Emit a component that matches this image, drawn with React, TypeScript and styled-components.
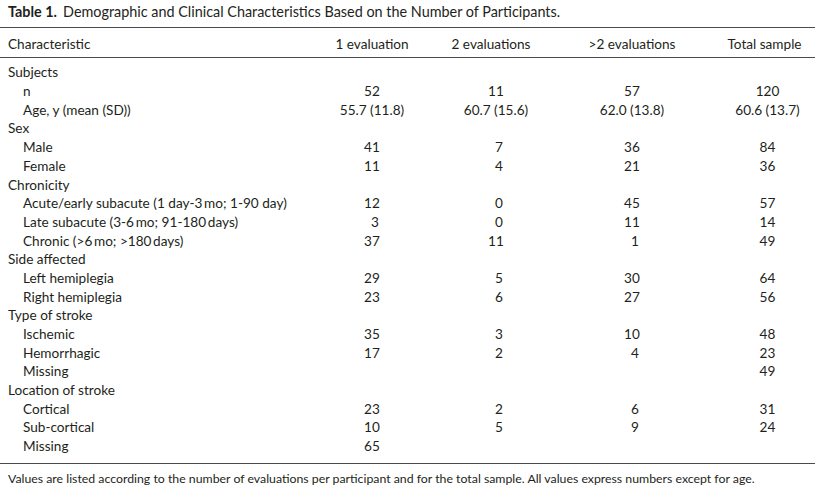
import React from 'react';
import styled, { createGlobalStyle } from 'styled-components';

const GlobalStyle = createGlobalStyle`
  html, body {
    margin: 0;
    padding: 0;
    background: #fff;
  }
  body {
    font-family: 'Lato', 'Liberation Sans', sans-serif;
    color: #231f20;
  }
`;

const Page = styled.div`
  width: 815px;
  padding-top: 3px;
`;

const Caption = styled.div`
  font-size: 14.4px;
  line-height: 18.7px;
  padding-left: 8px;
  margin-bottom: 5px;

  b {
    font-weight: 700;
    margin-right: 6px;
  }
`;

const Table = styled.div`
  border-top: 1px solid #4a4a4a;
  border-bottom: 1px solid #4a4a4a;
  font-size: 13.6px;
`;

const Row = styled.div`
  display: grid;
  grid-template-columns: 302px 124px 124px 148px 1fr;
  padding-left: 8px;
  line-height: 18.7px;
  height: 18.7px;
`;

const HeadRow = styled(Row)`
  height: auto;
  padding-top: 7px;
  padding-bottom: 4px;
  border-bottom: 1px solid #4a4a4a;
`;

const Body = styled.div`
  padding-top: 5px;
  padding-bottom: 7px;
`;

const Label = styled.div<{ $indent?: boolean }>`
  padding-left: ${p => (p.$indent ? '15px' : '0')};
  white-space: nowrap;
`;

const Cell = styled.div<{ $last?: boolean }>`
  text-align: center;
  white-space: nowrap;
  padding-left: ${p => (p.$last ? '14px' : '0')};
`;

// header labels sit a little left of the figures below them
const HeadCell = styled(Cell)<{ $pull?: number }>`
  padding-right: ${p => (p.$pull ?? 0) * 2}px;
`;

const Num = styled.span`
  display: inline-block;
  min-width: 14px;
  text-align: right;
`;

const Note = styled.div`
  font-size: 12.3px;
  line-height: 18.7px;
  margin-top: 6px;
  padding-left: 8px;
`;

type Line = { label: string; sub?: boolean; vals?: string[] };

const rows: Line[] = [
  { label: 'Subjects' },
  { label: 'n', sub: true, vals: ['52', '11', '57', '120'] },
  { label: 'Age, y (mean (SD))', sub: true, vals: ['55.7 (11.8)', '60.7 (15.6)', '62.0 (13.8)', '60.6 (13.7)'] },
  { label: 'Sex' },
  { label: 'Male', sub: true, vals: ['41', '7', '36', '84'] },
  { label: 'Female', sub: true, vals: ['11', '4', '21', '36'] },
  { label: 'Chronicity' },
  { label: 'Acute/early subacute (1 day-3\u2009mo; 1-90 day)', sub: true, vals: ['12', '0', '45', '57'] },
  { label: 'Late subacute (3-6\u2009mo; 91-180\u2009days)', sub: true, vals: ['3', '0', '11', '14'] },
  { label: 'Chronic (>6\u2009mo; >180\u2009days)', sub: true, vals: ['37', '11', '1', '49'] },
  { label: 'Side affected' },
  { label: 'Left hemiplegia', sub: true, vals: ['29', '5', '30', '64'] },
  { label: 'Right hemiplegia', sub: true, vals: ['23', '6', '27', '56'] },
  { label: 'Type of stroke' },
  { label: 'Ischemic', sub: true, vals: ['35', '3', '10', '48'] },
  { label: 'Hemorrhagic', sub: true, vals: ['17', '2', '4', '23'] },
  { label: 'Missing', sub: true, vals: ['', '', '', '49'] },
  { label: 'Location of stroke' },
  { label: 'Cortical', sub: true, vals: ['23', '2', '6', '31'] },
  { label: 'Sub-cortical', sub: true, vals: ['10', '5', '9', '24'] },
  { label: 'Missing', sub: true, vals: ['65', '', '', ''] },
];

export default function App() {
  return (
    <Page>
      <GlobalStyle />
      <Caption>
        <b>Table 1.</b>Demographic and Clinical Characteristics Based on the Number of Participants.
      </Caption>
      <Table>
        <HeadRow>
          <Label>Characteristic</Label>
          <HeadCell>1 evaluation</HeadCell>
          <HeadCell $pull={5}>2 evaluations</HeadCell>
          <HeadCell>&gt;2 evaluations</HeadCell>
          <HeadCell $last $pull={3}>Total sample</HeadCell>
        </HeadRow>
        <Body>
          {rows.map((r, i) => (
            <Row key={i}>
              <Label $indent={r.sub}>{r.label}</Label>
              {(r.vals || ['', '', '', '']).map((v, j) => (
                <Cell key={j} $last={j === 3}>
                  {v.includes('(') ? v : v ? <Num>{v}</Num> : null}
                </Cell>
              ))}
            </Row>
          ))}
        </Body>
      </Table>
      <Note>
        Values are listed according to the number of evaluations per participant and for the total sample. All values express numbers except for age.
      </Note>
    </Page>
  );
}
